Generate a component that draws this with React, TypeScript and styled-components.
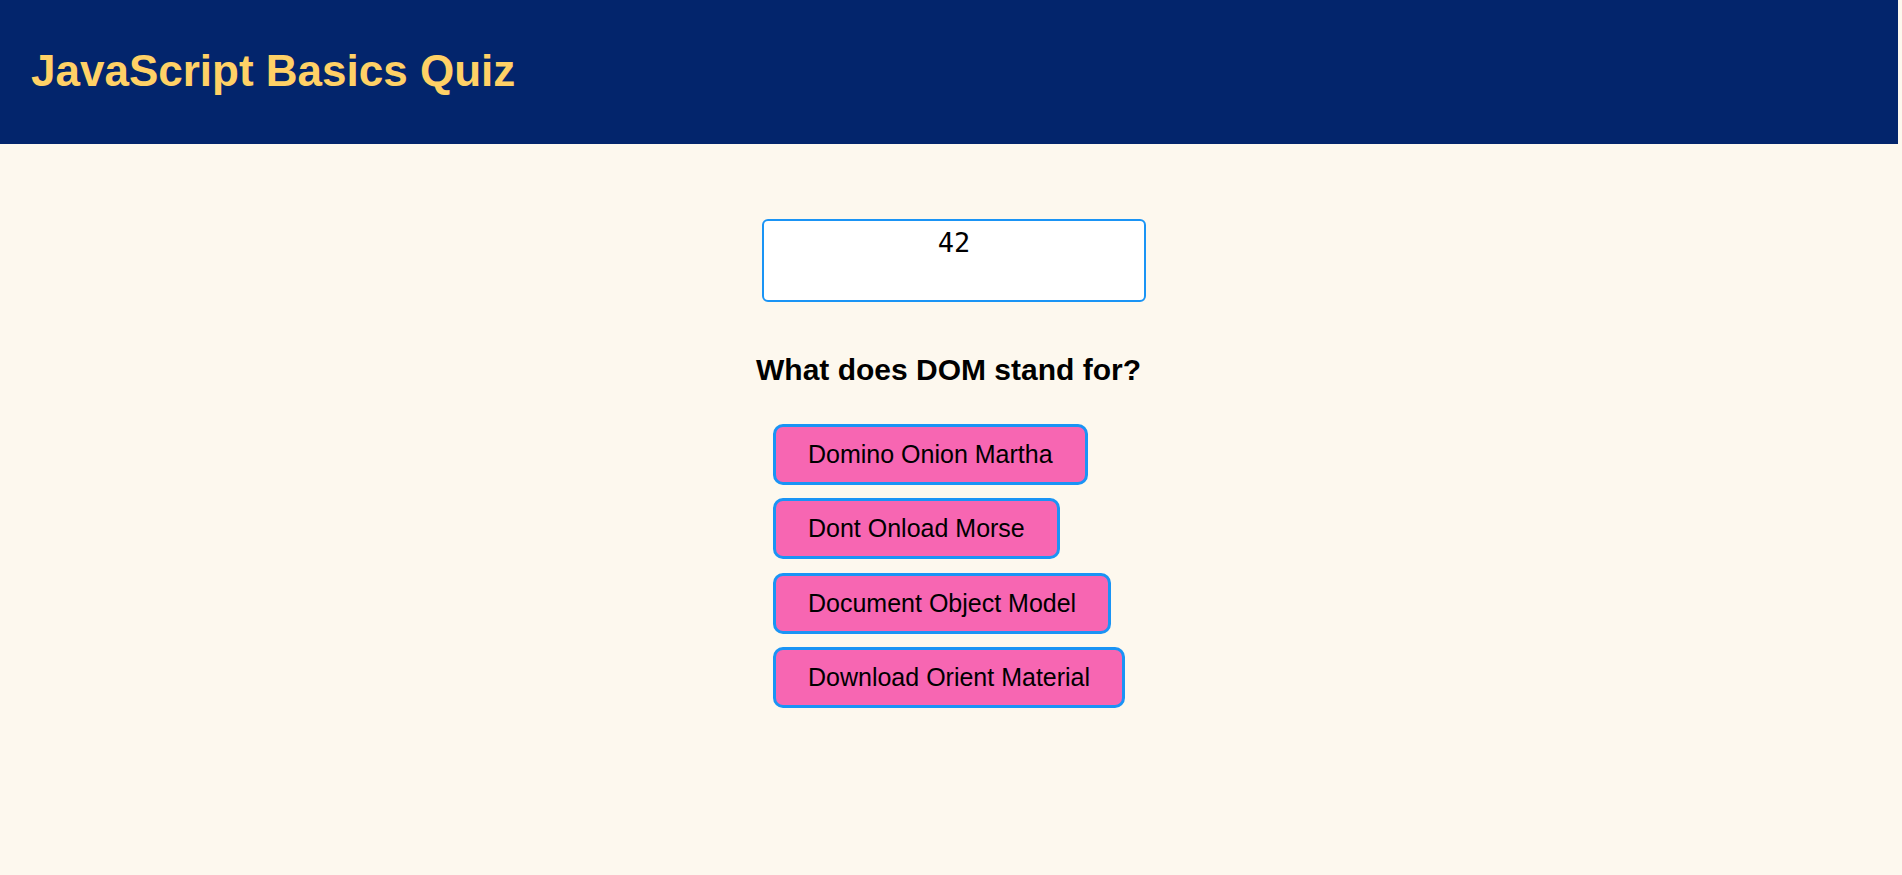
import React, { useState } from "react";
import styled, { createGlobalStyle } from "styled-components";

const GlobalStyle = createGlobalStyle`
  html, body {
    margin: 0;
    padding: 0;
    background: #fdf8ee;
    font-family: "Liberation Sans", Arial, sans-serif;
  }
`;

const Header = styled.header`
  box-sizing: border-box;
  width: calc(100% - 4px);
  height: 144px;
  background: #03256c;
  display: flex;
  align-items: center;
  padding-left: 31px;
`;

const Title = styled.h1`
  margin: 0 0 2px;
  color: #ffd166;
  font-size: 44px;
  font-weight: 700;
  line-height: 1;
`;

const Main = styled.main`
  display: flex;
  flex-direction: column;
  align-items: center;
  padding-top: 75px;
`;

const Quiz = styled.section`
  width: 384px;
  display: flex;
  flex-direction: column;
  align-items: center;
`;

const AnswerBox = styled.textarea`
  box-sizing: border-box;
  width: 384px;
  height: 83px;
  margin-left: 6px;
  border: 2px solid #1a94f5;
  border-radius: 6px;
  background: #fff;
  padding: 6px;
  resize: none;
  text-align: center;
  font-family: "DejaVu Sans Mono", monospace;
  font-size: 27px;
  color: #000;
  outline: none;
`;

const Question = styled.h2`
  margin: 51px 5px 0 0;
  white-space: nowrap;
  font-size: 30px;
  font-weight: 700;
  line-height: 34px;
  color: #000;
`;

const Options = styled.div`
  align-self: stretch;
  display: flex;
  flex-direction: column;
  align-items: flex-start;
  gap: 13.3px;
  margin-top: 37px;
  padding-left: 14px;
`;

const Option = styled.button`
  box-sizing: border-box;
  height: 61px;
  padding: 0 32px;
  border: 3px solid #1a94f5;
  border-radius: 10px;
  background: #f766b2;
  color: #000;
  font-family: "Liberation Sans", Arial, sans-serif;
  font-size: 25px;
  cursor: pointer;
`;

const options = [
  "Domino Onion Martha",
  "Dont Onload Morse",
  "Document Object Model",
  "Download Orient Material",
];

export default function App() {
  const [answer, setAnswer] = useState("42");
  return (
    <>
      <GlobalStyle />
      <Header>
        <Title>JavaScript Basics Quiz</Title>
      </Header>
      <Main>
        <Quiz>
          <AnswerBox value={answer} onChange={(e) => setAnswer(e.target.value)} />
          <Question>What does DOM stand for?</Question>
          <Options>
            {options.map((o) => (
              <Option key={o}>{o}</Option>
            ))}
          </Options>
        </Quiz>
      </Main>
    </>
  );
}
